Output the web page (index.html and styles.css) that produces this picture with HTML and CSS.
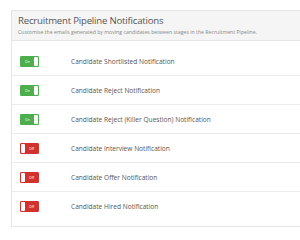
FILE: index.html
```html
<!DOCTYPE html>
<html lang="en">
<head>
	<meta charset="UTF-8">
	<title>Recruitment Pipeline Notifications</title>
	<link rel="stylesheet" href="styles.css">
</head>
<body>

	<div class="panel">
		<div class="panel-head">
			<h1 class="title">Recruitment Pipeline Notifications</h1>
			<p class="sub">Customise the emails generated by moving candidates between stages in the Recruitment Pipeline.</p>
		</div>
		<ul class="list">
			<li class="row">
				<span class="switch on"><span class="lbl">On</span><span class="knob"></span></span>
				<span class="name">Candidate Shortlisted Notification</span>
			</li>
			<li class="row">
				<span class="switch on"><span class="lbl">On</span><span class="knob"></span></span>
				<span class="name">Candidate Reject Notification</span>
			</li>
			<li class="row">
				<span class="switch on"><span class="lbl">On</span><span class="knob"></span></span>
				<span class="name">Candidate Reject (Killer Question) Notification</span>
			</li>
			<li class="row">
				<span class="switch off"><span class="knob"></span><span class="lbl">Off</span></span>
				<span class="name">Candidate Interview Notification</span>
			</li>
			<li class="row">
				<span class="switch off"><span class="knob"></span><span class="lbl">Off</span></span>
				<span class="name">Candidate Offer Notification</span>
			</li>
			<li class="row">
				<span class="switch off"><span class="knob"></span><span class="lbl">Off</span></span>
				<span class="name">Candidate Hired Notification</span>
			</li>
		</ul>
	</div>

</body>
</html>
```

FILE: styles.css
```css
body {
	margin: 0;
	padding: 10px 0 0 11px;
	background: #fff;
	font-family: "Open Sans", "Liberation Sans", sans-serif;
	color: #555;
	overflow: hidden;
}
.panel {
	width: 300px;
	border: 1px solid #e6e6e6;
	border-right: none;
	background: #fff;
}
.panel-head {
	height: 29px;
	padding: 0 6px;
	background: #f5f5f5;
	border-bottom: 1px solid #e6e6e6;
}
.title {
	margin: 0;
	padding-top: 3px;
	font-size: 9.6px;
	font-weight: normal;
	letter-spacing: -0.2px;
	line-height: 14px;
	color: #555;
}
.sub {
	margin: 1px 0 0;
	font-size: 5.2px;
	line-height: 7px;
	color: #888;
	white-space: nowrap;
}
.list {
	margin: 0;
	padding: 6px 0;
	list-style: none;
}
.row {
	display: flex;
	align-items: center;
	height: 28px;
	border-bottom: 1px solid #ececec;
}
.row:last-child {
	border-bottom: none;
}
.switch {
	display: flex;
	width: 19px;
	height: 11px;
	margin-left: 8px;
	box-sizing: border-box;
	border-radius: 1px;
}
.switch.on {
	background: #4cae4c;
	border: 1px solid #4cae4c;
}
.switch.off {
	background: #d2322d;
	border: 1px solid #d2322d;
}
.lbl {
	flex: 1;
	font-size: 3.5px;
	line-height: 9px;
	text-align: center;
	color: #fff;
}
.knob {
	width: 4px;
	background: #fff;
	border-radius: 1px;
}
.name {
	margin-left: 32px;
	font-size: 6.6px;
	color: #555;
}
```
